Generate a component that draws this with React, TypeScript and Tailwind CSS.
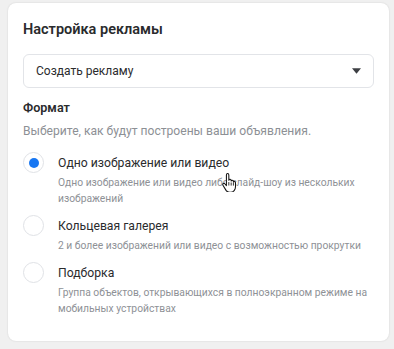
const OPTIONS = [
  {
    title: "Одно изображение или видео",
    desc: "Одно изображение или видео либо слайд-шоу из нескольких изображений",
    checked: true,
  },
  {
    title: "Кольцевая галерея",
    desc: "2 и более изображений или видео с возможностью прокрутки",
    checked: false,
  },
  {
    title: "Подборка",
    desc: "Группа объектов, открывающихся в полноэкранном режиме на мобильных устройствах",
    checked: false,
  },
];

function HandCursor() {
  return (
    <svg
      className="absolute left-[214px] top-[170px]"
      width="14"
      height="19"
      viewBox="0 0 16 22"
    >
      <path
        d="M5 2.2c0-.9.6-1.5 1.4-1.5s1.4.6 1.4 1.5v6.3c.2-.8.8-1.2 1.4-1.2.8 0 1.3.6 1.3 1.4v.6c.2-.6.7-.9 1.3-.9.8 0 1.3.6 1.3 1.4v.9c.2-.5.6-.8 1.2-.8.7 0 1.2.6 1.2 1.4v4.6c0 3.3-2.2 6.4-5.6 6.4H8.6c-1.7 0-3-.8-4-2.2L1 14.3c-.5-.8-.3-1.7.4-2.1.7-.4 1.5-.2 2 .5L5 14.6V2.2z"
        fill="#fff"
        stroke="#111"
        strokeWidth="1.2"
        strokeLinejoin="round"
      />
      <path d="M7.8 10.5v4M10.5 11v3.6M13.1 11.6v3" stroke="#111" strokeWidth="1" />
    </svg>
  );
}

export default function App() {
  return (
    <div className="w-[394px] h-[349px] bg-[#f0f0f0] pt-[3px] pl-[8px] font-['Roboto',sans-serif] overflow-hidden">
      <div className="relative w-[381px] h-[338px] bg-white rounded-[8px] shadow-[0_0_2px_rgba(0,0,0,0.14)] px-[15px] pt-[17px]">
        <h1 className="text-[14.5px] leading-[20px] font-semibold text-[#2a2b2d]">
          Настройка рекламы
        </h1>

        <div className="mt-[14px] h-[34px] w-[351px] flex items-center justify-between rounded-[6px] border border-[#e2e4e8] pl-[12px] pr-[12px]">
          <span className="text-[12px] text-[#2a2b2d]">Создать рекламу</span>
          <svg width="9" height="6" viewBox="0 0 10 6">
            <path d="M0 0h10L5 6z" fill="#3d3f43" />
          </svg>
        </div>

        <h2 className="mt-[11px] text-[12.6px] leading-[17px] font-semibold text-[#2a2b2d]">
          Формат
        </h2>
        <p className="mt-[7px] text-[12.1px] leading-[17px] text-[#8d9095]">
          Выберите, как будут построены ваши объявления.
        </p>

        <div className="mt-[14px] flex flex-col gap-[10px]">
          {OPTIONS.map((o) => (
            <div className="flex items-start gap-[14px]" key={o.title}>
              <div className="mt-[-2px] w-[21px] h-[21px] rounded-full border border-[#e0e2e6] flex items-center justify-center flex-shrink-0 bg-white">
                {o.checked && (
                  <div className="w-[10px] h-[10px] rounded-full bg-[#1877f2]" />
                )}
              </div>
              <div className="w-[316px]">
                <p className="text-[12.2px] leading-[18px] text-[#2a2b2d]">
                  {o.title}
                </p>
                <p className="mt-[3px] text-[10.3px] leading-[16px] text-[#8e9196]">
                  {o.desc}
                </p>
              </div>
            </div>
          ))}
        </div>

        <HandCursor />
      </div>
    </div>
  );
}
